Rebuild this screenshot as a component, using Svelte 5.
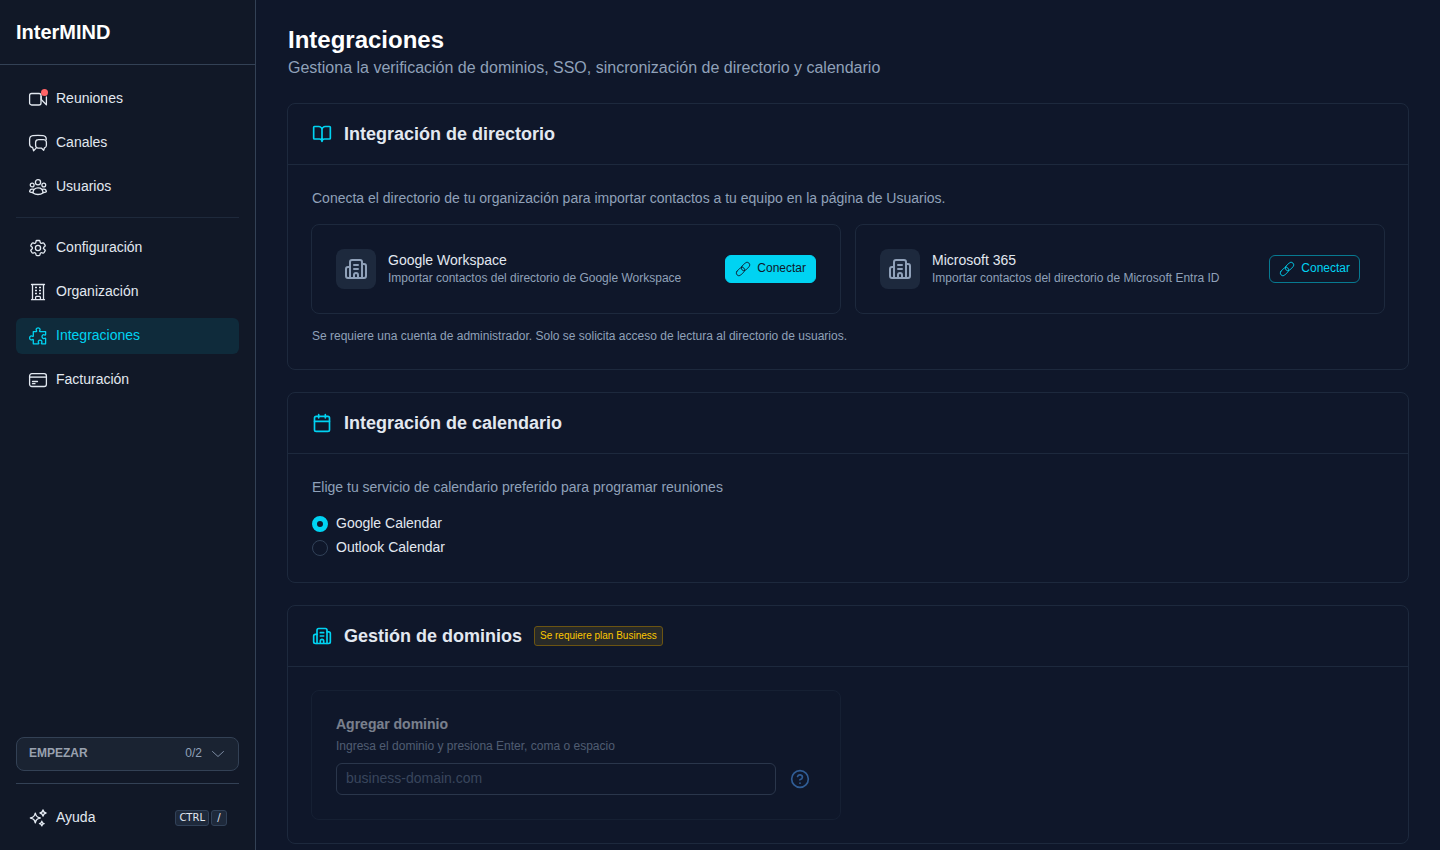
<script>
  const main = [
    { label: 'Reuniones', icon: 'video', dot: true },
    { label: 'Canales', icon: 'chat' },
    { label: 'Usuarios', icon: 'users' }
  ];
  const admin = [
    { label: 'Configuración', icon: 'gear' },
    { label: 'Organización', icon: 'office' },
    { label: 'Integraciones', icon: 'puzzle', active: true },
    { label: 'Facturación', icon: 'card' }
  ];
  const providers = [
    { name: 'Google Workspace', text: 'Importar contactos del directorio de Google Workspace', primary: true },
    { name: 'Microsoft 365', text: 'Importar contactos del directorio de Microsoft Entra ID', primary: false }
  ];
  let calendar = $state('google');
</script>

{#snippet navIcon(name)}
  <svg class="nav-icon" viewBox="0 0 20 20" aria-hidden="true">
    {#if name === 'video'}
      <rect x="1.6" y="4.500" width="11.400" height="11.500" rx="2" />
      <path d="M13.200 7.500v3l5.200 5.200V8" />
    {:else if name === 'chat'}
      <path d="M18.300 6.400c-.1-2.100-1.200-3.500-3.200-3.700a48 48 0 0 0-10.200 0C2.800 2.900 1.600 4.300 1.600 6.500v4.400c0 2 1 3.200 3 3.500l1 3.400 2.300-2.400" />
      <path d="M7.600 9.600c0-1.800 1-2.800 2.600-2.900 1.900-.2 3.700-.2 5.600 0 1.700.1 2.600 1.100 2.600 2.900v2.700c0 1.500-.7 2.400-2 2.700l-.7 2.300-2.100-2.100h-3.400c-1.700-.1-2.600-1.100-2.600-2.900Z" />
    {:else if name === 'users'}
      <circle cx="10" cy="5.300" r="2.600" />
      <circle cx="4.200" cy="8" r="1.900" />
      <circle cx="15.800" cy="8" r="1.900" />
      <path d="M5 16c0-3.400 2-5.200 5-5.200s5 1.800 5 5.200c-1.400 1-3 1.500-5 1.500S6.400 17 5 16Z" />
      <path d="M5.600 12.300c-2.300-.7-3.700.2-4 2.400 1 .6 2 .8 3.300.8M14.400 12.300c2.300-.7 3.700.2 4 2.400-1 .6-2 .8-3.300.8" />
    {:else if name === 'gear'}
      <path d="M7.995 3.283C8.070 2.831 8.461 2.500 8.919 2.500h2.162c.458 0 .849.331.924.783l.178 1.068c.52.312.26.572.537.725.62.034.123.070.184.106.271.164.613.218.909.107l1.014-.38a.938.938 0 0 1 1.141.409l1.081 1.872a.938.938 0 0 1-.217 1.192l-.836.689c-.245.201-.369.524-.363.841v.212c-.6.317.118.640.363.841l.836.689c.354.291.445.794.217 1.192l-1.081 1.872a.938.938 0 0 1-1.141.409l-1.014-.380c-.296-.111-.638-.057-.909.107l-.184.106c-.277.153-.485.413-.537.725l-.178 1.068a.938.938 0 0 1-.924.783H8.919a.938.938 0 0 1-.924-.783l-.178-1.068c-.052-.312-.260-.572-.537-.725l-.184-.106c-.271-.164-.613-.218-.909-.107l-1.014.380a.938.938 0 0 1-1.141-.409l-1.081-1.872a.938.938 0 0 1 .217-1.192l.836-.689c.245-.201.369-.524.363-.841v-.212c.006-.317-.118-.640-.363-.841l-.836-.689a.938.938 0 0 1-.217-1.192l1.081-1.872a.938.938 0 0 1 1.141-.409l1.014.380c.296.111.638.057.909-.107l.184-.106c.277-.153.485-.413.537-.725z" />
      <circle cx="10" cy="10" r="2.600" />
    {:else if name === 'office'}
      <path d="M3.500 2.500h13M3.500 17.700h13M4.500 2.500v15.200M15.500 2.500v15.200M7.600 17.500v-2.200c0-.6.4-1 1-1h2.800c.6 0 1 .4 1 1v2.200" />
      <path stroke-linecap="butt" d="M7 5.500h2M11 5.500h2M7 8.500h2M11 8.500h2M7 11.500h2M11 11.500h2" />
    {:else if name === 'puzzle'}
      <path d="M5.300 5.600h2.900c.5 0 .6-.5.3-.9-.7-.9-.5-2.900 1.600-2.900s2.300 2 1.600 2.900c-.3.4-.2.9.3.9h5.600v3c0 .6-.5.7-.9.4-1-.7-2.700-.4-2.700 1.600s1.700 2.300 2.700 1.600c.4-.3.9-.2.9.4v5.200h-3.700c-.5 0-.6-.5-.3-.9.7-.9.4-2.700-1.500-2.700s-2.200 1.800-1.500 2.700c.3.4.2.9-.3.9h-5v-4c0-.5-.5-.6-.9-.3-.9.7-2.800.5-2.800-1.600s1.900-2.300 2.800-1.600c.4.3.9.2.9-.3Z" />
    {:else if name === 'card'}
      <rect x="1.600" y="3.700" width="16.800" height="12.800" rx="2.200" />
      <path stroke-width="1.800" d="M1.800 7.100h16.400" opacity="0.8" />
      <path d="M4.500 11.500h5M4.500 13.700h2.500" />
    {:else}
      <path stroke-width="1.400" d="M7.300 5.200c.7 3.200 1.600 4.100 4.900 4.800-3.300.7-4.200 1.600-4.900 4.800-.7-3.200-1.600-4.100-4.900-4.800 3.300-.7 4.200-1.600 4.900-4.800ZM15 2c.4 1.900 1.100 2.600 3 3-1.900.4-2.600 1.100-3 3-.4-1.900-1.100-2.600-3-3 1.900-.4 2.600-1.100 3-3ZM13.800 13.300c.3 1.500.9 2 2.300 2.300-1.400.3-2 .8-2.300 2.300-.3-1.500-.9-2-2.300-2.300 1.400-.3 2-.8 2.300-2.300Z" />
    {/if}
  </svg>
{/snippet}

{#snippet building()}
  <svg class="line-icon" viewBox="0 0 24 24" aria-hidden="true">
    <path d="M10 12h4M10 8h4M14 21v-3a2 2 0 0 0-4 0v3M6 10H4a2 2 0 0 0-2 2v7a2 2 0 0 0 2 2h16a2 2 0 0 0 2-2V9a2 2 0 0 0-2-2h-2" />
    <path d="M6 21V5a2 2 0 0 1 2-2h8a2 2 0 0 1 2 2v16" />
  </svg>
{/snippet}

{#snippet navItem(item)}
  <li>
    <a href="#{item.icon}" class:active={item.active} aria-current={item.active ? 'page' : undefined}>
      <span class="icon-wrap">
        {@render navIcon(item.icon)}
        {#if item.dot}<span class="dot"></span>{/if}
      </span>
      <span>{item.label}</span>
    </a>
  </li>
{/snippet}

<div class="app">
  <aside>
    <div class="brand">InterMIND</div>
    <nav>
      <ul>
        {#each main as item}{@render navItem(item)}{/each}
      </ul>
      <hr />
      <ul>
        {#each admin as item}{@render navItem(item)}{/each}
      </ul>
    </nav>
    <div class="foot">
      <button class="start" type="button">
        <span class="start-title">EMPEZAR</span>
        <span class="count">0/2</span>
        <svg class="chevron" viewBox="0 0 16 16" aria-hidden="true"><path d="m2.500 5.500 5.500 5 5.500-5" /></svg>
      </button>
      <a class="help" href="#ayuda">
        {@render navIcon('sparkles')}
        <span class="grow">Ayuda</span>
        <span class="keys"><kbd>CTRL</kbd><kbd>/</kbd></span>
      </a>
    </div>
  </aside>

  <main>
    <header>
      <h1>Integraciones</h1>
      <p>Gestiona la verificación de dominios, SSO, sincronización de directorio y calendario</p>
    </header>

    <section>
      <div class="head">
        <svg class="line-icon" viewBox="0 0 24 24" aria-hidden="true">
          <path d="M12 7v14M3 18a1 1 0 0 1-1-1V4a1 1 0 0 1 1-1h5a4 4 0 0 1 4 4 4 4 0 0 1 4-4h5a1 1 0 0 1 1 1v13a1 1 0 0 1-1 1h-6a3 3 0 0 0-3 3 3 3 0 0 0-3-3z" />
        </svg>
        <h2>Integración de directorio</h2>
      </div>
      <div class="body">
        <p class="lead">Conecta el directorio de tu organización para importar contactos a tu equipo en la página de Usuarios.</p>
        <div class="grid">
          {#each providers as p}
            <div class="card provider">
              <span class="tile">{@render building()}</span>
              <div class="grow">
                <h3>{p.name}</h3>
                <p class="small">{p.text}</p>
              </div>
              <button class="connect" class:primary={p.primary} type="button">
                <svg viewBox="0 0 16 16" aria-hidden="true">
                  <rect x="0.600" y="7.800" width="9.800" height="5.400" rx="2.700" transform="rotate(-45 5.500 10.500)" />
                  <rect x="5.600" y="2.800" width="9.800" height="5.400" rx="2.700" transform="rotate(-45 10.500 5.500)" />
                </svg>
                Conectar
              </button>
            </div>
          {/each}
        </div>
        <p class="small note">Se requiere una cuenta de administrador. Solo se solicita acceso de lectura al directorio de usuarios.</p>
      </div>
    </section>

    <section>
      <div class="head">
        <svg class="line-icon" viewBox="0 0 24 24" aria-hidden="true">
          <path d="M8 2v4M16 2v4M3 10h18" /><rect x="3" y="4" width="18" height="18" rx="2" />
        </svg>
        <h2>Integración de calendario</h2>
      </div>
      <div class="body">
        <p class="lead">Elige tu servicio de calendario preferido para programar reuniones</p>
        <div class="radios">
          <label><input type="radio" name="calendar" value="google" bind:group={calendar} />Google Calendar</label>
          <label><input type="radio" name="calendar" value="outlook" bind:group={calendar} />Outlook Calendar</label>
        </div>
      </div>
    </section>

    <section>
      <div class="head">
        {@render building()}
        <h2>Gestión de dominios</h2>
        <span class="badge">Se requiere plan Business</span>
      </div>
      <div class="body">
        <div class="grid">
          <div class="card domain">
            <label for="domain">Agregar dominio</label>
            <p class="small" id="domain-hint">Ingresa el dominio y presiona Enter, coma o espacio</p>
            <div class="field">
              <input id="domain" type="text" placeholder="business-domain.com" aria-describedby="domain-hint" disabled />
              <button class="info" type="button" aria-label="Más información" disabled>
                <svg class="line-icon" viewBox="0 0 24 24" aria-hidden="true">
                  <circle cx="12" cy="12" r="10" /><path d="M9.090 9a3 3 0 0 1 5.830 1c0 2-3 3-3 3M12 17h.01" />
                </svg>
              </button>
            </div>
          </div>
        </div>
      </div>
    </section>
  </main>
</div>

<style>
  :global(body) { background: #0f172a; }
  .app {
    display: flex;
    height: 100vh;
    overflow: hidden;
    background: #0f172a;
    color: #e2e8f0;
    font: 14px/20px "Liberation Sans", Arial, sans-serif;
  }
  h1, h2, h3, p, ul { margin: 0; padding: 0; }
  ul { list-style: none; display: flex; flex-direction: column; gap: 8px; }
  a { color: inherit; text-decoration: none; }
  button, input { font: inherit; box-sizing: border-box; }
  svg { fill: none; stroke: currentColor; stroke-linecap: round; stroke-linejoin: round; flex: none; }
  .grow { flex: 1; min-width: 0; }

  aside {
    box-sizing: border-box;
    width: 256px;
    flex: none;
    display: flex;
    flex-direction: column;
    background: #111827;
    border-right: 1px solid #334155;
  }
  .brand {
    padding: 16px;
    border-bottom: 1px solid #334155;
    color: #fff;
    font-size: 20px;
    line-height: 32px;
    font-weight: 700;
  }
  nav { flex: 1; padding: 16px; }
  nav a {
    display: flex;
    align-items: center;
    gap: 8px;
    height: 36px;
    padding: 0 12px;
    border-radius: 6px;
  }
  nav a > span:last-child, .help > .grow { padding-bottom: 2px; }
  nav a.active { background: #0f2b3b; color: #00d3f2; }
  nav hr { height: 1px; margin: 12px 0; border: 0; background: #1e293b; }
  .icon-wrap { position: relative; display: flex; }
  .nav-icon { width: 20px; height: 20px; stroke-width: 1.3; }
  .dot {
    position: absolute;
    top: 0;
    right: 0;
    width: 7px;
    height: 7px;
    border-radius: 50%;
    background: #ff6467;
  }
  .foot { padding: 0 16px 14px; }
  .start {
    display: flex;
    align-items: center;
    width: 100%;
    height: 34px;
    padding: 0 12px;
    border: 1px solid #334155;
    border-radius: 8px;
    background: #1a2332;
    color: #90a1b9;
    font-size: 12px;
  }
  .start-title { flex: 1; text-align: left; font-weight: 700; color: #99a1af; }
  .start span { padding-bottom: 2px; }
  .chevron { width: 16px; height: 16px; margin-left: 8px; color: #7b8aa1; }
  .help {
    display: flex;
    align-items: center;
    gap: 8px;
    margin-top: 12px;
    padding: 16px 12px 0;
    height: 36px;
    border-top: 1px solid #334155;
  }
  .keys { display: flex; gap: 2px; }
  kbd {
    box-sizing: border-box;
    min-width: 16px;
    height: 16px;
    padding: 0 3px;
    border: 1px solid #314158;
    border-radius: 3px;
    background: #1e293b;
    font: 10px/14px "DejaVu Sans", sans-serif;
    text-align: center;
  }

  main { flex: 1; min-width: 0; overflow: hidden; padding: 24px 31px; }
  header { padding: 0 1px; margin-bottom: 23px; color: #90a1b9; font-size: 16px; line-height: 24px; }
  h1 { color: #fff; font-size: 24px; line-height: 32px; }
  section { margin-bottom: 22px; border: 1px solid #1d293d; border-radius: 8px; }
  .head {
    display: flex;
    align-items: center;
    gap: 12px;
    height: 60px;
    padding: 0 24px;
    border-bottom: 1px solid #1d293d;
    color: #00d3f2;
  }
  h2 { color: #e2e8f0; font-size: 18px; line-height: 28px; }
  .line-icon { width: 20px; height: 20px; stroke-width: 2; }
  .body { padding: 23px; }
  .lead { padding: 0 1px; color: #90a1b9; }
  .grid { display: grid; grid-template-columns: 1fr 1fr; gap: 14px; }
  .lead + .grid { margin-top: 16px; }
  .card { box-sizing: border-box; padding: 24px; border: 1px solid #1d293d; border-radius: 8px; }
  .provider { display: flex; align-items: center; gap: 12px; height: 90px; }
  .provider .grow { padding-bottom: 2px; }
  .tile {
    display: grid;
    place-items: center;
    width: 40px;
    height: 40px;
    border-radius: 8px;
    background: #1d293d;
    color: #90a1b9;
  }
  .tile .line-icon { width: 24px; height: 24px; }
  h3 { font-size: 14px; line-height: 20px; font-weight: 400; }
  .small { color: #90a1b9; font-size: 12px; line-height: 16px; }
  .note { padding: 14px 1px 2px; }
  .connect {
    display: flex;
    align-items: center;
    gap: 6px;
    height: 28px;
    padding: 0 9px 2px;
    border: 1px solid #077a91;
    border-radius: 6px;
    background: transparent;
    color: #00d3f2;
    font-size: 12px;
  }
  .connect svg { width: 16px; height: 16px; stroke-width: 0.8; margin-top: 2px; }
  .connect.primary { border-color: #00d3f2; background: #00d3f2; color: #0f172a; }
  .radios { display: flex; flex-direction: column; gap: 4px; padding: 16px 1px 2px; }
  .radios label { display: flex; align-items: center; gap: 8px; }
  input[type='radio'] {
    appearance: none;
    width: 16px;
    height: 16px;
    margin: 2px 0 0;
    border: 1px solid #314158;
    border-radius: 50%;
  }
  input[type='radio']:checked { border: 5px solid #00d3f2; }
  .badge {
    padding: 0 5px;
    border: 1px solid #6b5412;
    border-radius: 3px;
    background: #282a28;
    color: #fcc800;
    font-size: 10px;
    line-height: 18px;
  }
  .domain { height: 130px; opacity: 0.5; }
  .domain label { display: block; margin-bottom: 5px; font-weight: 700; line-height: 18px; }
  .field { display: flex; align-items: center; gap: 8px; margin-top: 9px; }
  .field input {
    flex: 1;
    min-width: 0;
    height: 32px;
    padding: 0 9px 2px;
    border: 1px solid #45556c;
    border-radius: 6px;
    background: transparent;
    color: inherit;
  }
  .field input::placeholder { color: #62748e; opacity: 1; }
  .info { display: grid; place-items: center; width: 32px; height: 32px; padding: 0; border: 0; background: none; color: #51a2ff; }
</style>
